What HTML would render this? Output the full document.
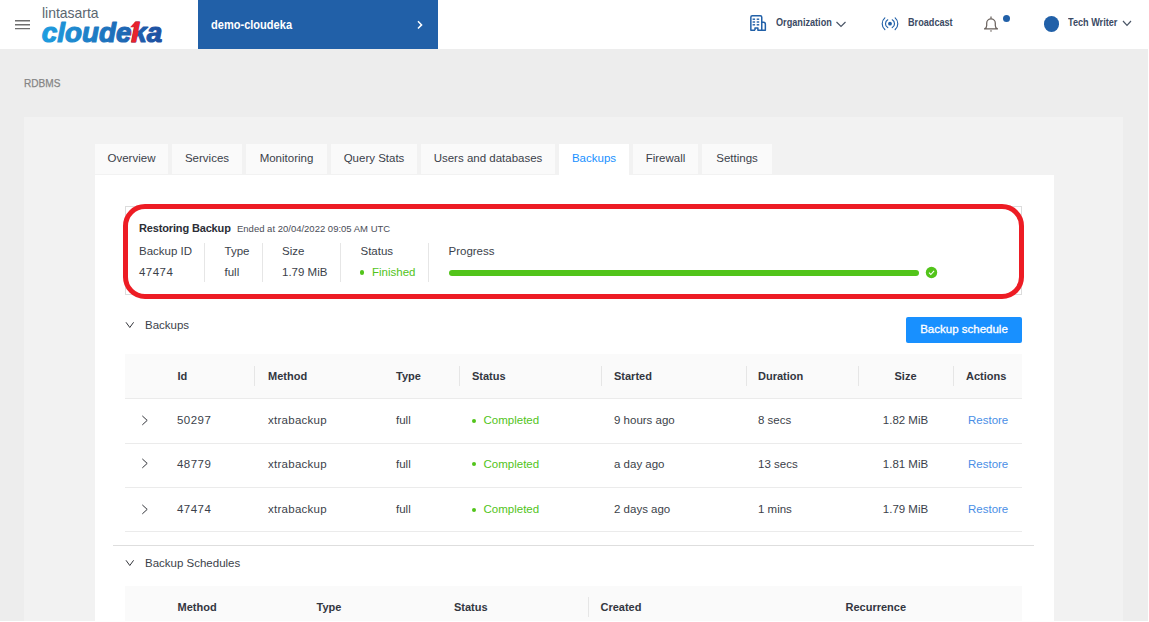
<!DOCTYPE html>
<html><head><meta charset="utf-8"><title>RDBMS - Backups</title>
<style>
*{box-sizing:border-box;margin:0;padding:0}
html,body{width:1149px;height:622px;overflow:hidden;background:#fff}
body{font-family:"Liberation Sans",sans-serif;font-size:11.5px;color:#3b3f4a;position:relative}
.a{position:absolute;white-space:nowrap}
#bg{left:0;top:49px;width:1148px;height:572px;background:#ededed}
#panel{left:24px;top:117px;width:1099px;height:504px;background:#f2f2f2}
#card{left:95px;top:175px;width:959px;height:446px;background:#fff}
#hdr{left:0;top:0;width:1148px;height:49px;background:#fff}
#proj{left:198px;top:0;width:240px;height:49px;background:#2160a8}
.cx{display:inline-block;transform-origin:0 50%}
.tab{position:absolute;top:144px;height:30px;background:#fafafa;line-height:29px;text-align:center;color:#3b3f4a}
.tab.on{background:#fff;color:#1890ff;height:31px}
.t{position:absolute;white-space:nowrap;line-height:14px;height:14px}
.th{font-weight:bold;color:#33363f;font-size:11px}
.id{letter-spacing:.45px}
.xb{letter-spacing:.27px}
.g{color:#52c41a}
.lnk{color:#4a8ee6}
.hl{position:absolute;left:125px;width:897px;height:1px;background:#ebebeb}
.vs{position:absolute;width:1px;background:#e6e6e6}
</style></head><body>
<div class="a" id="bg"></div>
<div class="a" id="hdr"></div>
<div class="a" id="proj"></div>
<div class="a" id="panel"></div>
<div class="a" id="card"></div>

<!-- header -->
<svg class="a" style="left:14px;top:18px" width="17" height="14" viewBox="0 0 17 14"><g stroke="#6e6e6e" stroke-width="1.4"><path d="M1 2.700h15M1 6.800h15M1 10.600h15"/></g></svg>
<div class="a" style="left:41.5px;top:4px;font-size:15px;line-height:18px;color:#5b6670"><span class="cx" style="transform:scaleX(.93)">lintasarta</span></div>
<svg class="a" style="left:38px;top:16px" width="130" height="32" viewBox="0 0 130 32">
<defs><linearGradient id="lg" x1="0" x2="1" y1="0" y2="0"><stop offset="0" stop-color="#1e9ee0"/><stop offset="1" stop-color="#1f4fa0"/></linearGradient></defs>
<text x="3.800" y="25.700" font-family="Liberation Sans, sans-serif" font-weight="bold" font-style="italic" font-size="27.600" fill="url(#lg)" stroke="url(#lg)" stroke-width="1.200" stroke-linejoin="round" textLength="120.500" lengthAdjust="spacingAndGlyphs">cloudeka</text>
<clipPath id="kc"><path d="M95 3h7.800l-4.600 25h-7.800z"/></clipPath>
<text x="3.800" y="25.700" clip-path="url(#kc)" font-family="Liberation Sans, sans-serif" font-weight="bold" font-style="italic" font-size="27.600" fill="#e8232d" stroke="#e8232d" stroke-width="1.200" stroke-linejoin="round" textLength="120.500" lengthAdjust="spacingAndGlyphs">cloudeka</text>
<path d="M97.300 5.600l-5.200 5.600h3.600l1.800-2.200z" fill="#e8232d"/>
</svg>
<div class="a" style="left:211px;top:16px;font-size:13px;font-weight:bold;color:#fff;line-height:18px"><span class="cx" style="transform:scaleX(.85)">demo-cloudeka</span></div>
<svg class="a" style="left:415px;top:19px" width="10" height="12" viewBox="0 0 10 12"><path d="M3 2.300l3.600 3.600-3.600 3.600" fill="none" stroke="#fff" stroke-width="1.500"/></svg>

<div class="a" style="left:775.5px;top:14px;font-size:11px;font-weight:bold;color:#3b4a63;line-height:16px"><span class="cx" style="transform:scaleX(.83)">Organization</span></div>
<div class="a" style="left:908px;top:14px;font-size:11px;font-weight:bold;color:#3b4a63;line-height:16px"><span class="cx" style="transform:scaleX(.83)">Broadcast</span></div>
<div class="a" style="left:1067.5px;top:14px;font-size:11px;font-weight:bold;color:#3b4a63;line-height:16px"><span class="cx" style="transform:scaleX(.83)">Tech Writer</span></div>
<svg class="a" style="left:835px;top:19px" width="12" height="10" viewBox="0 0 12 10"><path d="M1.5 3l4.5 4.5L10.500 3" fill="none" stroke="#4a5566" stroke-width="1.2"/></svg>
<svg class="a" style="left:1121px;top:18.300px" width="12" height="10" viewBox="0 0 12 10"><path d="M2 3l4 4.300L10 3" fill="none" stroke="#4a5566" stroke-width="1.2"/></svg>
<svg class="a" style="left:749px;top:14px" width="18" height="20" viewBox="0 0 18 20"><g fill="none" stroke="#2160a8" stroke-width="1.500" stroke-linejoin="round"><path d="M6 16.250H1.850V3.300Q1.850 1.850 3.300 1.850H11.300Q12.750 1.850 12.750 3.300V16.250H8.900V13.900H6V16.250"/><path d="M12.750 8.350H14.500Q16.350 8.350 16.350 10.200V16.250H12.750"/></g><g fill="#2160a8"><rect x="3.600" y="4.500" width="2.500" height="1.400"/><rect x="7.700" y="4.500" width="2.500" height="1.400"/><rect x="3.600" y="7.300" width="2.500" height="1.400"/><rect x="7.700" y="7.300" width="2.500" height="1.400"/><rect x="3.600" y="10.100" width="2.500" height="1.400"/><rect x="7.700" y="10.100" width="2.500" height="1.400"/></g></svg>
<svg class="a" style="left:881px;top:16px" width="18" height="16" viewBox="0 0 18 16"><g fill="none" stroke="#2160a8" stroke-width="1.150" stroke-linecap="round"><path d="M3.840 1.850A7.800 7.800 0 0 0 3.840 13.550M14.160 1.850A7.800 7.800 0 0 1 14.160 13.550M6.750 3.800A4.500 4.500 0 0 0 6.750 11.600M11.250 3.800A4.500 4.500 0 0 1 11.250 11.600"/></g><circle cx="9" cy="7.700" r="1.900" fill="#2160a8"/></svg>
<svg class="a" style="left:982.900px;top:14px" width="16" height="20" viewBox="0 0 16 20"><path d="M1.600 14.900Q3.700 13.900 3.700 11.500V9.200a4.300 4.300 0 0 1 8.600 0V11.500Q12.300 13.900 14.400 14.900ZM8 2.400v2.300" fill="none" stroke="#6a625e" stroke-width="1.250" stroke-linejoin="round"/><path d="M6.800 16.600h2.400l-1.200 1.400z" fill="#6a625e"/></svg>
<div class="a" style="left:1003px;top:14.500px;width:7px;height:7px;border-radius:50%;background:#2160a8"></div>
<div class="a" style="left:1043.700px;top:15.800px;width:15.800px;height:15.800px;border-radius:50%;background:#2160a8"></div>

<div class="a" style="left:24px;top:76px;font-size:11px;color:#858585;-webkit-text-stroke:.25px #858585;line-height:14px"><span class="cx" style="transform:scaleX(.915)">RDBMS</span></div>

<!-- tabs -->
<div class="tab" style="left:95px;width:73px">Overview</div>
<div class="tab" style="left:172px;width:70px">Services</div>
<div class="tab" style="left:246px;width:81px">Monitoring</div>
<div class="tab" style="left:331px;width:86px">Query Stats</div>
<div class="tab" style="left:421px;width:134px">Users and databases</div>
<div class="tab on" style="left:559px;width:70px">Backups</div>
<div class="tab" style="left:633px;width:65px">Firewall</div>
<div class="tab" style="left:702px;width:70px">Settings</div>

<!-- restoring box -->
<div class="a" style="left:125px;top:206px;width:897px;height:89px;border:1px solid #dcdcdc"></div>
<div class="a" style="left:123px;top:203.500px;width:901px;height:95.500px;border:5px solid #ed1c24;border-radius:22px"></div>
<div class="t" style="left:139px;top:221px;font-weight:bold;font-size:11px;letter-spacing:-.15px;color:#2b2e36">Restoring Backup</div>
<div class="t" style="left:237px;top:221.500px;font-size:9.500px;color:#4a4d57">Ended at 20/04/2022 09:05 AM UTC</div>
<div class="t" style="left:139px;top:244px">Backup ID</div><div class="t id" style="left:139px;top:265px">47474</div>
<div class="t" style="left:224.500px;top:244px">Type</div><div class="t" style="left:224.500px;top:265px">full</div>
<div class="t" style="left:282px;top:244px">Size</div><div class="t" style="left:282px;top:265px">1.79 MiB</div>
<div class="t" style="left:360.500px;top:244px">Status</div><div class="t g" style="left:372px;top:265px">Finished</div>
<div class="a" style="left:359.800px;top:270.200px;width:4.600px;height:4.600px;border-radius:50%;background:#52c41a"></div>
<div class="t" style="left:448.500px;top:244px">Progress</div>
<div class="vs" style="left:204px;top:243px;height:39px"></div>
<div class="vs" style="left:262px;top:243px;height:39px"></div>
<div class="vs" style="left:340px;top:243px;height:39px"></div>
<div class="vs" style="left:428px;top:243px;height:39px"></div>
<div class="a" style="left:448.500px;top:269.500px;width:470px;height:6px;border-radius:3px;background:#52c41a"></div>
<svg class="a" style="left:925px;top:266px" width="13" height="13" viewBox="0 0 13 13"><circle cx="6.500" cy="6.500" r="5.700" fill="#52c41a"/><path d="M4 6.700l1.800 1.800 3.300-3.600" fill="none" stroke="#fff" stroke-width="1.100"/></svg>

<!-- backups -->
<svg class="a" style="left:124px;top:320px" width="11" height="10" viewBox="0 0 11 10"><path d="M2 2.300l3.800 5.200 3.800-5.200" fill="none" stroke="#26282e" stroke-width=".950"/></svg>
<div class="t" style="left:145px;top:318px">Backups</div>
<div class="a" style="left:906px;top:317px;width:116px;height:26px;background:#1890ff;border-radius:2px;color:#fff;text-align:center;line-height:25px;font-size:11.500px;-webkit-text-stroke:.3px #fff">Backup schedule</div>

<div class="a" style="left:125px;top:354px;width:897px;height:44px;background:#fafafa"></div>
<div class="hl" style="top:398px"></div><div class="hl" style="top:443px"></div><div class="hl" style="top:487px"></div><div class="hl" style="top:531px"></div>
<div class="vs" style="left:254px;top:366px;height:20px"></div><div class="vs" style="left:459px;top:366px;height:20px"></div><div class="vs" style="left:601px;top:366px;height:20px"></div><div class="vs" style="left:745.500px;top:366px;height:20px"></div><div class="vs" style="left:857.500px;top:366px;height:20px"></div><div class="vs" style="left:953px;top:366px;height:20px"></div>
<div class="t th" style="left:177.500px;top:369px">Id</div><div class="t th" style="left:268px;top:369px">Method</div><div class="t th" style="left:396px;top:369px">Type</div><div class="t th" style="left:472px;top:369px">Status</div><div class="t th" style="left:614px;top:369px">Started</div><div class="t th" style="left:758px;top:369px">Duration</div><div class="t th" style="left:857.500px;width:96px;text-align:center;top:369px">Size</div><div class="t th" style="left:966px;top:369px">Actions</div>

<svg class="a" style="left:139px;top:414.5px" width="11" height="11" viewBox="0 0 11 11"><path d="M3.300 .900l4.900 4.500-4.900 4.500" fill="none" stroke="#26282e" stroke-width=".950"/></svg><div class="t id" style="left:177px;top:413px">50297</div><div class="t xb" style="left:268px;top:413px">xtrabackup</div><div class="t" style="left:396px;top:413px">full</div><div class="a" style="left:472px;top:418.5px;width:4px;height:4px;border-radius:50%;background:#52c41a"></div><div class="t g" style="left:483.500px;top:413px">Completed</div><div class="t" style="left:614px;top:413px">9 hours ago</div><div class="t" style="left:758px;top:413px">8 secs</div><div class="t" style="left:857.500px;width:96px;text-align:center;top:413px">1.82 MiB</div><div class="t lnk" style="left:968px;top:413px">Restore</div>
<svg class="a" style="left:139px;top:458.300px" width="11" height="11" viewBox="0 0 11 11"><path d="M3.300 .900l4.900 4.500-4.900 4.500" fill="none" stroke="#26282e" stroke-width=".950"/></svg><div class="t id" style="left:177px;top:456.800px">48779</div><div class="t xb" style="left:268px;top:456.800px">xtrabackup</div><div class="t" style="left:396px;top:456.800px">full</div><div class="a" style="left:472px;top:462.300px;width:4px;height:4px;border-radius:50%;background:#52c41a"></div><div class="t g" style="left:483.500px;top:456.800px">Completed</div><div class="t" style="left:614px;top:456.800px">a day ago</div><div class="t" style="left:758px;top:456.800px">13 secs</div><div class="t" style="left:857.500px;width:96px;text-align:center;top:456.800px">1.81 MiB</div><div class="t lnk" style="left:968px;top:456.800px">Restore</div>
<svg class="a" style="left:139px;top:503.5px" width="11" height="11" viewBox="0 0 11 11"><path d="M3.300 .900l4.900 4.500-4.900 4.500" fill="none" stroke="#26282e" stroke-width=".950"/></svg><div class="t id" style="left:177px;top:502px">47474</div><div class="t xb" style="left:268px;top:502px">xtrabackup</div><div class="t" style="left:396px;top:502px">full</div><div class="a" style="left:472px;top:507.5px;width:4px;height:4px;border-radius:50%;background:#52c41a"></div><div class="t g" style="left:483.500px;top:502px">Completed</div><div class="t" style="left:614px;top:502px">2 days ago</div><div class="t" style="left:758px;top:502px">1 mins</div><div class="t" style="left:857.500px;width:96px;text-align:center;top:502px">1.79 MiB</div><div class="t lnk" style="left:968px;top:502px">Restore</div>


<div class="a" style="left:113px;top:545px;width:921px;height:1px;background:#dedede"></div>
<svg class="a" style="left:124px;top:558px" width="11" height="10" viewBox="0 0 11 10"><path d="M2 2.300l3.800 5.200 3.800-5.200" fill="none" stroke="#26282e" stroke-width=".950"/></svg>
<div class="t" style="left:145px;top:556px">Backup Schedules</div>
<div class="a" style="left:125px;top:586px;width:897px;height:35px;background:#fafafa"></div>
<div class="vs" style="left:588px;top:597px;height:20px"></div>
<div class="t th" style="left:177.500px;top:600px">Method</div><div class="t th" style="left:316.500px;top:600px">Type</div><div class="t th" style="left:454px;top:600px">Status</div><div class="t th" style="left:600.500px;top:600px">Created</div><div class="t th" style="left:845.500px;top:600px">Recurrence</div>
</body></html>
